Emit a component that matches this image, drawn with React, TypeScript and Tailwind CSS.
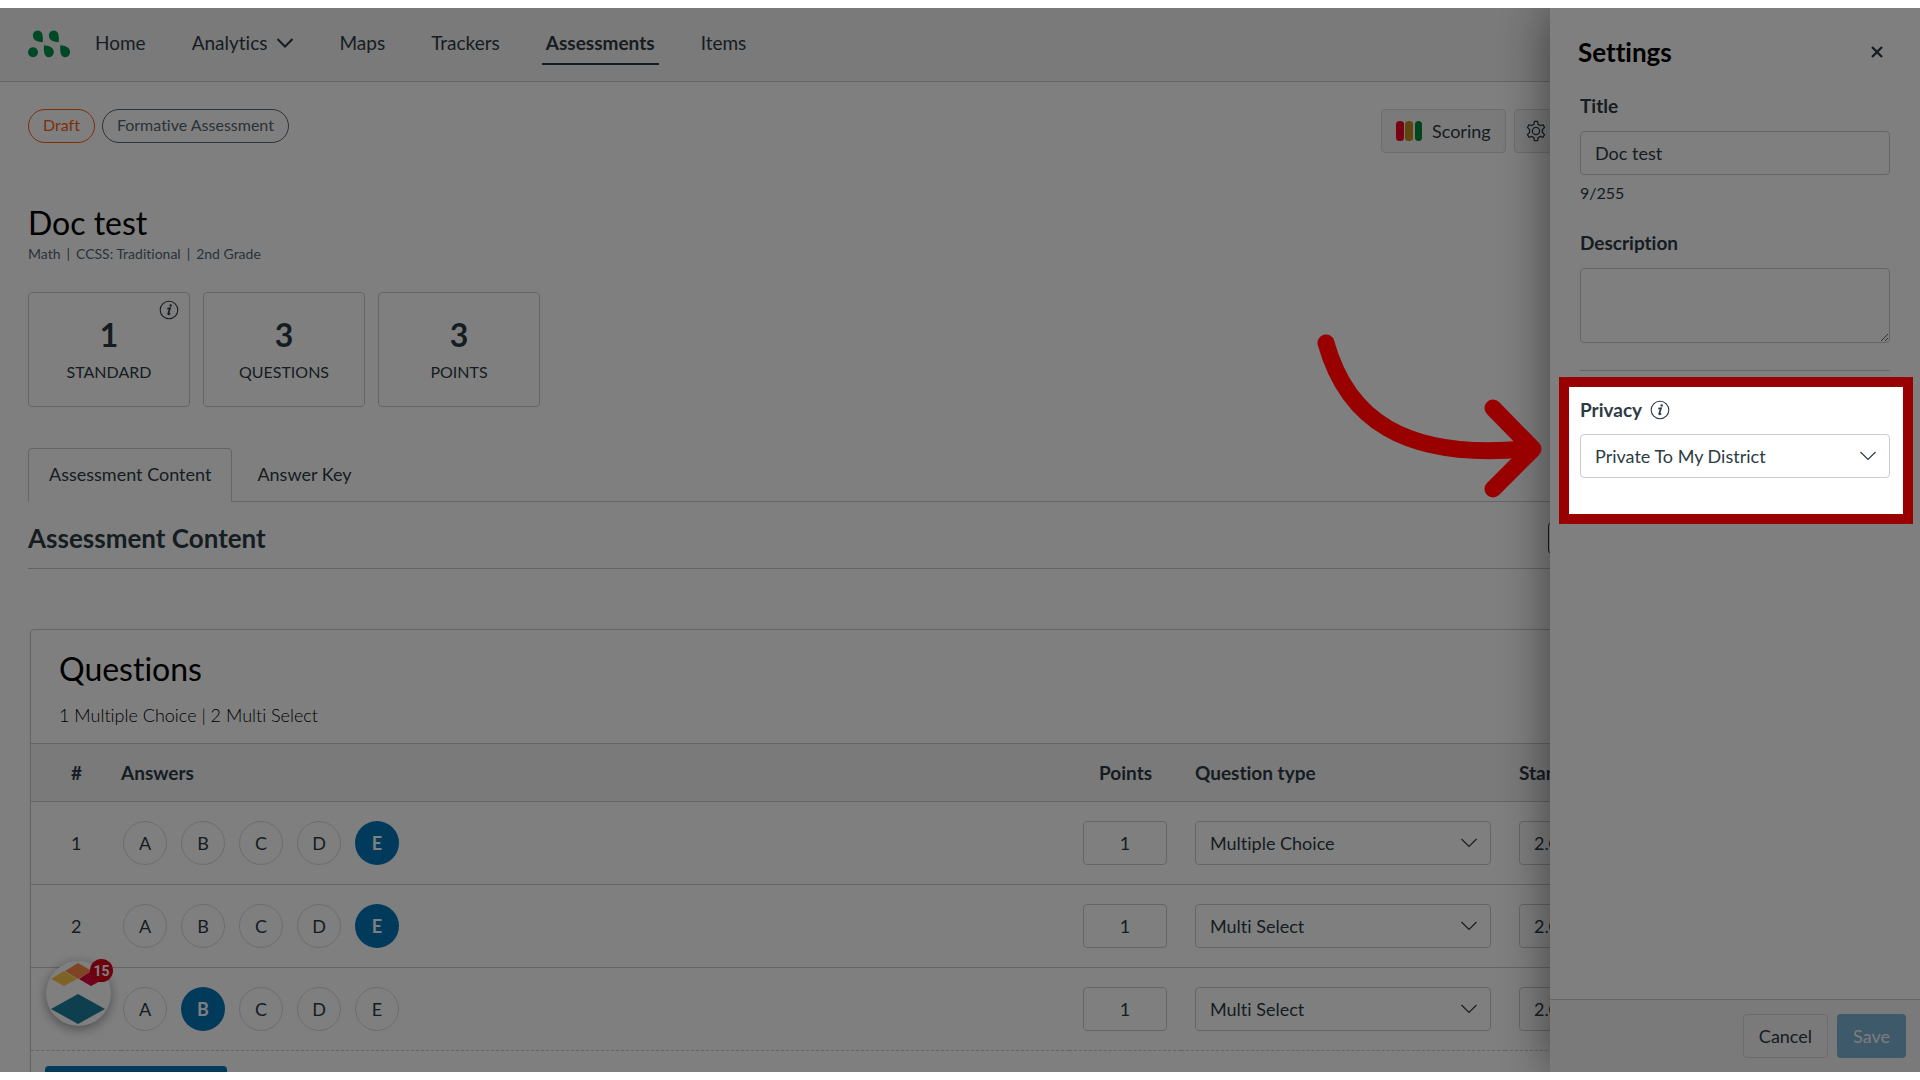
import { useState } from "react";
import type { ReactNode } from "react";

const navItems = ["Home", "Analytics", "Maps", "Trackers", "Assessments", "Items"];

const stats = [
  { value: 1, label: "STANDARD", info: true },
  { value: 3, label: "QUESTIONS", info: false },
  { value: 3, label: "POINTS", info: false },
];

const questions = [
  { id: 1, answer: "E", points: 1, type: "Multiple Choice", standard: "2.OA.A.1" },
  { id: 2, answer: "E", points: 1, type: "Multi Select", standard: "2.OA.A.1" },
  { id: 3, answer: "B", points: 1, type: "Multi Select", standard: "2.OA.A.1" },
];

const choices = ["A", "B", "C", "D", "E"];

function Logo() {
  const drop =
    "M14.7 11.3C10 11 4.9 9.5 4.9 4.5A4.8 4.8 0 0 1 14.5 4C14.9 6 14.9 9 14.7 11.3Z";

  return (
    <svg viewBox="0 0 42 28" className="h-7 w-[42px] overflow-visible" fill="#00904d">
      <path d={drop} />
      <path d={drop} transform="translate(16 0)" />
      <circle cx="5" cy="21.3" r="5" />
      <path d={drop} transform="translate(30.7 25.6) rotate(180)" />
      <path d={drop} transform="translate(47 25.6) rotate(180)" />
    </svg>
  );
}

function ChevronDown({ className, width }: { className?: string; width: number }) {
  return (
    <svg viewBox="0 0 16 10" className={className} fill="none" stroke="currentColor" strokeWidth={width}>
      <path d="M.5 1L8 8.5 15.5 1" />
    </svg>
  );
}

function InfoIcon() {
  return (
    <svg viewBox="0 0 20 20" className="size-5" fill="none" stroke="currentColor">
      <circle cx="10" cy="10" r="8.8" strokeWidth="1.1" />
      <path d="M8.3 8.6l2.7-.4-1.8 5.5c-.2.9.8.9 1.9-.3" strokeWidth="1.7" />
      <circle cx="11.7" cy="5.4" r="1.2" fill="currentColor" stroke="none" />
    </svg>
  );
}

function GearIcon() {
  return (
    <svg viewBox="0 0 24 24" className="size-[22px]" fill="none" stroke="currentColor" strokeWidth="1.4">
      <path d="M10.3 1.5h3.4l.6 3.3 2.3 1.3 3-1 1.7 3-2.3 2.2v3.4l2.3 2.2-1.7 3-3-1-2.3 1.3-.6 3.3h-3.4l-.6-3.3-2.3-1.3-3 1-1.7-3L5 13.7v-3.4L2.7 8.1l1.7-3 3 1 2.3-1.3z" />
      <circle cx="12" cy="12" r="4" />
    </svg>
  );
}

type SelectBoxProps = { id?: string; label?: string; options: string[] };

function SelectBox({ id, label, options }: SelectBoxProps) {
  return (
    <div className="relative">
      <select
        id={id}
        aria-label={label}
        className="h-11 w-full appearance-none rounded border border-[#c7cdd1] bg-white px-3.5 text-lg text-[#2d3b45]"
      >
        {options.map((option) => (
          <option key={option}>{option}</option>
        ))}
      </select>
      <ChevronDown width={1.2} className="pointer-events-none absolute top-[17px] right-3.5 h-2.5 w-4" />
    </div>
  );
}

function Navbar() {
  return (
    <nav className="flex h-[74px] items-start gap-[21px] border-b border-[#c7cdd1] bg-[#f5f5f5] px-7 pt-[23px]">
      <Logo />
      <div className="flex gap-[38px]">
        {navItems.map((item) => (
          <a
            key={item}
            href="#"
            className={
              item === "Assessments"
                ? "border-b-2 border-[#2d3b45] px-1 pb-2 text-[19px] leading-6 font-bold"
                : "flex items-center gap-2.5 border-b-2 border-transparent px-1 pb-2 text-[19px] leading-6"
            }
          >
            {item}
            {item === "Analytics" && <ChevronDown width={2} className="h-2.5 w-4" />}
          </a>
        ))}
      </div>
    </nav>
  );
}

function HeaderCell({ children, className = "" }: { children: ReactNode; className?: string }) {
  return (
    <th className={`h-[58px] border-b border-[#c7cdd1] text-left text-[19px] font-bold ${className}`}>
      {children}
    </th>
  );
}

function QuestionsTable() {
  const [answers, setAnswers] = useState(questions.map((q) => q.answer));

  return (
    <table className="w-full table-fixed border-separate border-spacing-0 text-lg">
      <colgroup>
        <col className="w-[90px]" />
        <col />
        <col className="w-[112px]" />
        <col className="w-[324px]" />
        <col className="w-[386px]" />
      </colgroup>
      <thead className="bg-[#f5f5f5]">
        <tr>
          <HeaderCell className="pl-10">#</HeaderCell>
          <HeaderCell>Answers</HeaderCell>
          <HeaderCell className="pl-[30px]">Points</HeaderCell>
          <HeaderCell className="pl-3.5">Question type</HeaderCell>
          <HeaderCell className="pl-3.5">Standards</HeaderCell>
        </tr>
      </thead>
      <tbody>
        {questions.map((question, index) => (
          <tr
            key={question.id}
            className="*:h-[83px] *:border-b *:border-[#c7cdd1] last:*:border-dashed"
          >
            <td className="pl-10">{question.id}</td>
            <td>
              <div className="flex gap-3.5 pl-0.5">
                {choices.map((choice) => (
                  <button
                    key={choice}
                    onClick={() => setAnswers(answers.map((a, i) => (i === index ? choice : a)))}
                    className={
                      answers[index] === choice
                        ? "size-11 rounded-full bg-[#0374b5] font-bold text-white"
                        : "size-11 rounded-full border border-[#d7dade]"
                    }
                  >
                    {choice}
                  </button>
                ))}
              </div>
            </td>
            <td className="pr-3.5 pl-3.5">
              <input
                aria-label="Points"
                defaultValue={question.points}
                className="h-11 w-full rounded border border-[#c7cdd1] bg-white text-center"
              />
            </td>
            <td className="pr-3.5 pl-3.5">
              <SelectBox label="Question type" options={[question.type]} />
            </td>
            <td className="pr-3.5 pl-3.5">
              <SelectBox label="Standards" options={[question.standard]} />
            </td>
          </tr>
        ))}
      </tbody>
    </table>
  );
}

function AssessmentPage() {
  return (
    <main className="px-7 pt-[27px]">
      <div className="flex items-start justify-between">
        <div className="flex gap-[7px] text-base">
          <span className="rounded-full border border-[#fc5e13] px-3.5 pt-[3px] pb-[5px] text-[#fc5e13]">
            Draft
          </span>
          <span className="rounded-full border border-[#556572] px-3.5 pt-[3px] pb-[5px] text-[#556572]">
            Formative Assessment
          </span>
        </div>
        <div className="flex w-[511px] gap-2">
          <button className="flex h-11 items-center gap-2.5 rounded border border-[#d7dade] bg-[#f5f5f5] px-3.5 text-lg">
            <svg viewBox="0 0 26 20" className="h-5 w-[26px]">
              <rect width="8" height="20" rx="3.5" fill="#f00024" />
              <rect x="9" width="8" height="20" rx="3.5" fill="#c08a1e" />
              <rect x="19" width="7" height="20" rx="3.5" fill="#03893d" />
            </svg>
            Scoring
          </button>
          <button
            aria-label="Options"
            className="flex h-11 w-16 items-center rounded border border-[#d7dade] bg-[#f5f5f5] pl-2.5"
          >
            <GearIcon />
          </button>
        </div>
      </div>

      <h1 className="mt-[50px] text-[32px] leading-10 text-black">Doc test</h1>
      <p className="mt-px flex gap-1.5 text-sm text-[#556572]">
        <span>Math</span>
        <span>|</span>
        <span>CCSS: Traditional</span>
        <span>|</span>
        <span>2nd Grade</span>
      </p>

      <div className="mt-7 flex gap-[13px]">
        {stats.map((stat) => (
          <div
            key={stat.label}
            className="relative flex h-[115px] w-[162px] flex-col items-center rounded border border-[#c7cdd1] pt-[22px]"
          >
            <strong className="text-[32px] leading-10">{stat.value}</strong>
            <span className="mt-[5px] text-base">{stat.label}</span>
            {stat.info && (
              <span className="absolute top-[7px] right-2.5">
                <InfoIcon />
              </span>
            )}
          </div>
        ))}
      </div>

      <div className="mt-[41px] flex text-lg leading-6">
        <button className="rounded-t border border-b-0 border-[#c7cdd1] px-5 pt-[13px] pb-4">
          Assessment Content
        </button>
        <button className="flex-1 border-b border-[#c7cdd1] px-[25px] pb-px text-left">Answer Key</button>
      </div>

      <div className="mt-5 flex items-center justify-between border-b border-[#c7cdd1] pb-[14px]">
        <h2 className="text-[26px] leading-8 font-bold">Assessment Content</h2>
        <button aria-label="Edit content" className="h-8 w-[344px] rounded border border-[#2d3b45]" />
      </div>

      <section className="mt-[60px] ml-0.5 rounded border border-[#c7cdd1] shadow">
        <div className="border-b border-[#c7cdd1] px-7 pt-[19px] pb-4">
          <h2 className="text-[32px] leading-10 text-black">Questions</h2>
          <p className="mt-3.5 text-lg leading-6 font-light text-black">1 Multiple Choice | 2 Multi Select</p>
        </div>
        <QuestionsTable />
        <div className="px-3.5 pt-[15px]">
          <button aria-label="Add question" className="h-11 w-[182px] rounded bg-[#0374b5]" />
        </div>
      </section>
    </main>
  );
}

function HelpBubble() {
  return (
    <button
      aria-label="Help center"
      className="absolute bottom-[46px] left-[46px] size-[65px] rounded-full bg-white shadow-[0_3px_12px_rgba(0,0,0,0.4)]"
    >
      <svg viewBox="0 0 65 65" className="size-full">
        <path d="M5 18l13-8 13 8-13 7z" fill="#ffc44d" />
        <path d="M33 18l12-8 13 8-13 7z" fill="#e4003a" />
        <path d="M19 10l13-8 14 8-14 8z" fill="#ff8a45" />
        <path d="M5 48l27-15 27 15-27 15z" fill="#1b7f9c" />
      </svg>
      <span className="absolute -top-0.5 -right-0.5 flex size-[23px] items-center justify-center rounded-full bg-[#d8001a] font-['Roboto'] text-sm font-bold text-white">
        15
      </span>
    </button>
  );
}

function SettingsDrawer() {
  const [title, setTitle] = useState("Doc test");

  return (
    <aside className="absolute inset-y-0 right-0 flex w-[370px] flex-col bg-white shadow-[0_0_48px_rgba(0,0,0,0.5)]">
      <div className="flex items-center justify-between pt-7 pr-9 pl-7">
        <h2 className="text-[26px] leading-8 font-bold text-black">Settings</h2>
        <button aria-label="Close">
          <svg viewBox="0 0 14 14" className="size-3.5" stroke="currentColor" strokeWidth="2.4">
            <path d="M2 2l10 10M12 2L2 12" />
          </svg>
        </button>
      </div>

      <div className="flex flex-1 flex-col px-[30px] pt-[26px] text-lg leading-6">
        <label htmlFor="title" className="text-[19px] font-bold">
          Title
        </label>
        <input
          id="title"
          value={title}
          onChange={(e) => setTitle(e.target.value)}
          className="mt-[13px] h-11 rounded border border-[#c7cdd1] px-3.5"
        />
        <span className="mt-1.5 text-base">9/255</span>
        <label htmlFor="description" className="mt-[26px] text-[19px] font-bold">
          Description
        </label>
        <textarea id="description" className="mt-[13px] h-[75px] rounded border border-[#c7cdd1]" />
        <hr className="mt-[27px] border-[#c7cdd1]" />
        <div className="mt-[27px] mb-3 flex items-center gap-2">
          <label htmlFor="privacy" className="text-[19px] font-bold">
            Privacy
          </label>
          <InfoIcon />
        </div>
        <SelectBox id="privacy" options={["Private To My District"]} />
      </div>

      <div className="flex justify-end gap-[9px] border-t border-[#c7cdd1] bg-[#f5f5f5] px-3.5 pt-3.5 pb-3.5 text-lg">
        <button className="h-11 rounded border border-[#d7dade] px-[15px]">Cancel</button>
        <button disabled className="h-11 rounded bg-[#0374b5] px-4 text-white opacity-50">
          Save
        </button>
      </div>
    </aside>
  );
}

// The frame's huge spread shadow dims everything outside of it
function Spotlight() {
  return (
    <>
      <div className="pointer-events-none absolute top-[369px] right-[7px] h-[147px] w-[354px] border-10 border-[#990000] shadow-[0_0_0_3000px_rgba(0,0,0,0.5)]" />
      <svg
        viewBox="0 0 230 170"
        className="pointer-events-none absolute top-[322px] right-[375px] h-[170px] w-[230px]"
        fill="none"
        stroke="#990000"
        strokeLinecap="round"
        strokeLinejoin="round"
      >
        <path d="M11 13C32 88 88 130 210 119" strokeWidth="17" />
        <path d="M178 78l40 41-40 40" strokeWidth="17" />
      </svg>
    </>
  );
}

export default function App() {
  return (
    <div className="h-screen bg-white py-2 font-['Lato',sans-serif] text-[#2d3b45] [font-variant-ligatures:none]">
      <div className="relative h-full overflow-hidden">
        <Navbar />
        <AssessmentPage />
        <HelpBubble />
        <SettingsDrawer />
        <Spotlight />
      </div>
    </div>
  );
}
